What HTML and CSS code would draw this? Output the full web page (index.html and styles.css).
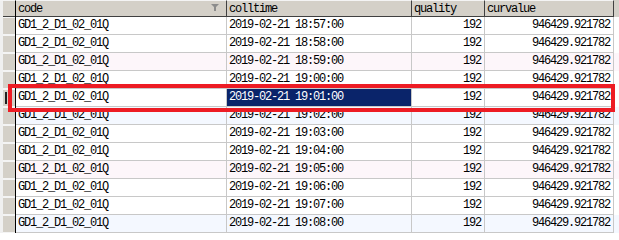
FILE: index.html
```html
<!DOCTYPE html>
<html>
<head>
<meta charset="utf-8">
<link rel="stylesheet" href="styles.css">
</head>
<body>
<div class="grid">
  <div class="row head">
    <div class="rh"><span class="btn"></span></div>
    <div class="hc">code<svg class="filter" width="8" height="7" viewBox="0 0 8 7"><path d="M0 0H8L5 3V7H3V3Z" fill="#8c8c8c"/></svg></div>
    <div class="hc">colltime</div>
    <div class="hc">quality</div>
    <div class="hc">curvalue</div>
  </div>
  <div class="row"><div class="rh"><span class="btn"></span></div><div class="c">GD1_2_D1_02_01Q</div><div class="c">2019-02-21 18:57:00</div><div class="c r">192</div><div class="c r">946429.921782</div></div>
  <div class="row"><div class="rh"><span class="btn"></span></div><div class="c">GD1_2_D1_02_01Q</div><div class="c">2019-02-21 18:58:00</div><div class="c r">192</div><div class="c r">946429.921782</div></div>
  <div class="row pink"><div class="rh"><span class="btn"></span></div><div class="c">GD1_2_D1_02_01Q</div><div class="c">2019-02-21 18:59:00</div><div class="c r">192</div><div class="c r">946429.921782</div></div>
  <div class="row"><div class="rh"><span class="btn"></span></div><div class="c">GD1_2_D1_02_01Q</div><div class="c">2019-02-21 19:00:00</div><div class="c r">192</div><div class="c r">946429.921782</div></div>
  <div class="row cur"><div class="rh"><span class="btn"><i class="ind"></i></span></div><div class="c">GD1_2_D1_02_01Q</div><div class="c sel">2019-02-21 19:01:00</div><div class="c r">192</div><div class="c r">946429.921782</div></div>
  <div class="row blue"><div class="rh"><span class="btn"></span></div><div class="c">GD1_2_D1_02_01Q</div><div class="c">2019-02-21 19:02:00</div><div class="c r">192</div><div class="c r">946429.921782</div></div>
  <div class="row"><div class="rh"><span class="btn"></span></div><div class="c">GD1_2_D1_02_01Q</div><div class="c">2019-02-21 19:03:00</div><div class="c r">192</div><div class="c r">946429.921782</div></div>
  <div class="row"><div class="rh"><span class="btn"></span></div><div class="c">GD1_2_D1_02_01Q</div><div class="c">2019-02-21 19:04:00</div><div class="c r">192</div><div class="c r">946429.921782</div></div>
  <div class="row pink"><div class="rh"><span class="btn"></span></div><div class="c">GD1_2_D1_02_01Q</div><div class="c">2019-02-21 19:05:00</div><div class="c r">192</div><div class="c r">946429.921782</div></div>
  <div class="row"><div class="rh"><span class="btn"></span></div><div class="c">GD1_2_D1_02_01Q</div><div class="c">2019-02-21 19:06:00</div><div class="c r">192</div><div class="c r">946429.921782</div></div>
  <div class="row"><div class="rh"><span class="btn"></span></div><div class="c">GD1_2_D1_02_01Q</div><div class="c">2019-02-21 19:07:00</div><div class="c r">192</div><div class="c r">946429.921782</div></div>
  <div class="row blue"><div class="rh"><span class="btn"></span></div><div class="c">GD1_2_D1_02_01Q</div><div class="c">2019-02-21 19:08:00</div><div class="c r">192</div><div class="c r">946429.921782</div></div>
  <div class="mark"></div>
</div>
</body>
</html>
```

FILE: styles.css
```css
html, body {
  margin: 0;
  padding: 0;
  background: #ffffff;
}
body {
  width: 619px;
  height: 240px;
  overflow: hidden;
  font-family: "Liberation Mono", "DejaVu Sans Mono", monospace;
  font-size: 12px;
  letter-spacing: -1.2px;
  color: #000;
}
.grid {
  position: relative;
}
.row {
  display: grid;
  grid-template-columns: 16px 211px 185px 73px 129px;
  height: 18px;
  background: #ffffff;
}
.row.pink { background: #fdf6fa; }
.row.blue { background: #f4f8ff; }
.row.head {
  height: 17px;
  background: #d4d0c8;
}
.rh {
  display: flex;
  background: #f0f0f0;
  padding-left: 3px;
  border-right: 1px solid #000;
  box-sizing: border-box;
}
.btn {
  flex: 1;
  background: #d4d0c8;
  border-bottom: 1px solid #f4f4f4;
  border-top: 1px solid #f4f4f4;
  position: relative;
}
.head .rh {
  border-top: 1px solid #f4f4f4;
}
.head .btn {
  border-bottom: 1px solid #404040;
  border-top: none;
}
.ind {
  position: absolute;
  left: 2px;
  top: 2px;
  width: 2px;
  height: 12px;
  background: #202020;
}
.hc {
  position: relative;
  box-sizing: border-box;
  border-top: 1px solid #f4f4f4;
  border-right: 1px solid #404040;
  border-bottom: 1px solid #404040;
  padding: 1px 0 0 2px;
  line-height: 14px;
  white-space: nowrap;
}
.filter {
  position: absolute;
  right: 7px;
  top: 3px;
}
.c {
  box-sizing: border-box;
  border-right: 1px solid #c8c8c8;
  border-bottom: 1px solid #c8c8c8;
  padding: 0 3px 0 2px;
  line-height: 17px;
  white-space: nowrap;
  overflow: hidden;
}
.c.r {
  text-align: right;
  padding-right: 3px;
}
.c.sel {
  background: #0a246a;
  color: #ffffff;
}
.mark {
  position: absolute;
  left: 8px;
  top: 84px;
  width: 607px;
  height: 28px;
  box-sizing: border-box;
  border: 4px solid #ed1c24;
}
```
